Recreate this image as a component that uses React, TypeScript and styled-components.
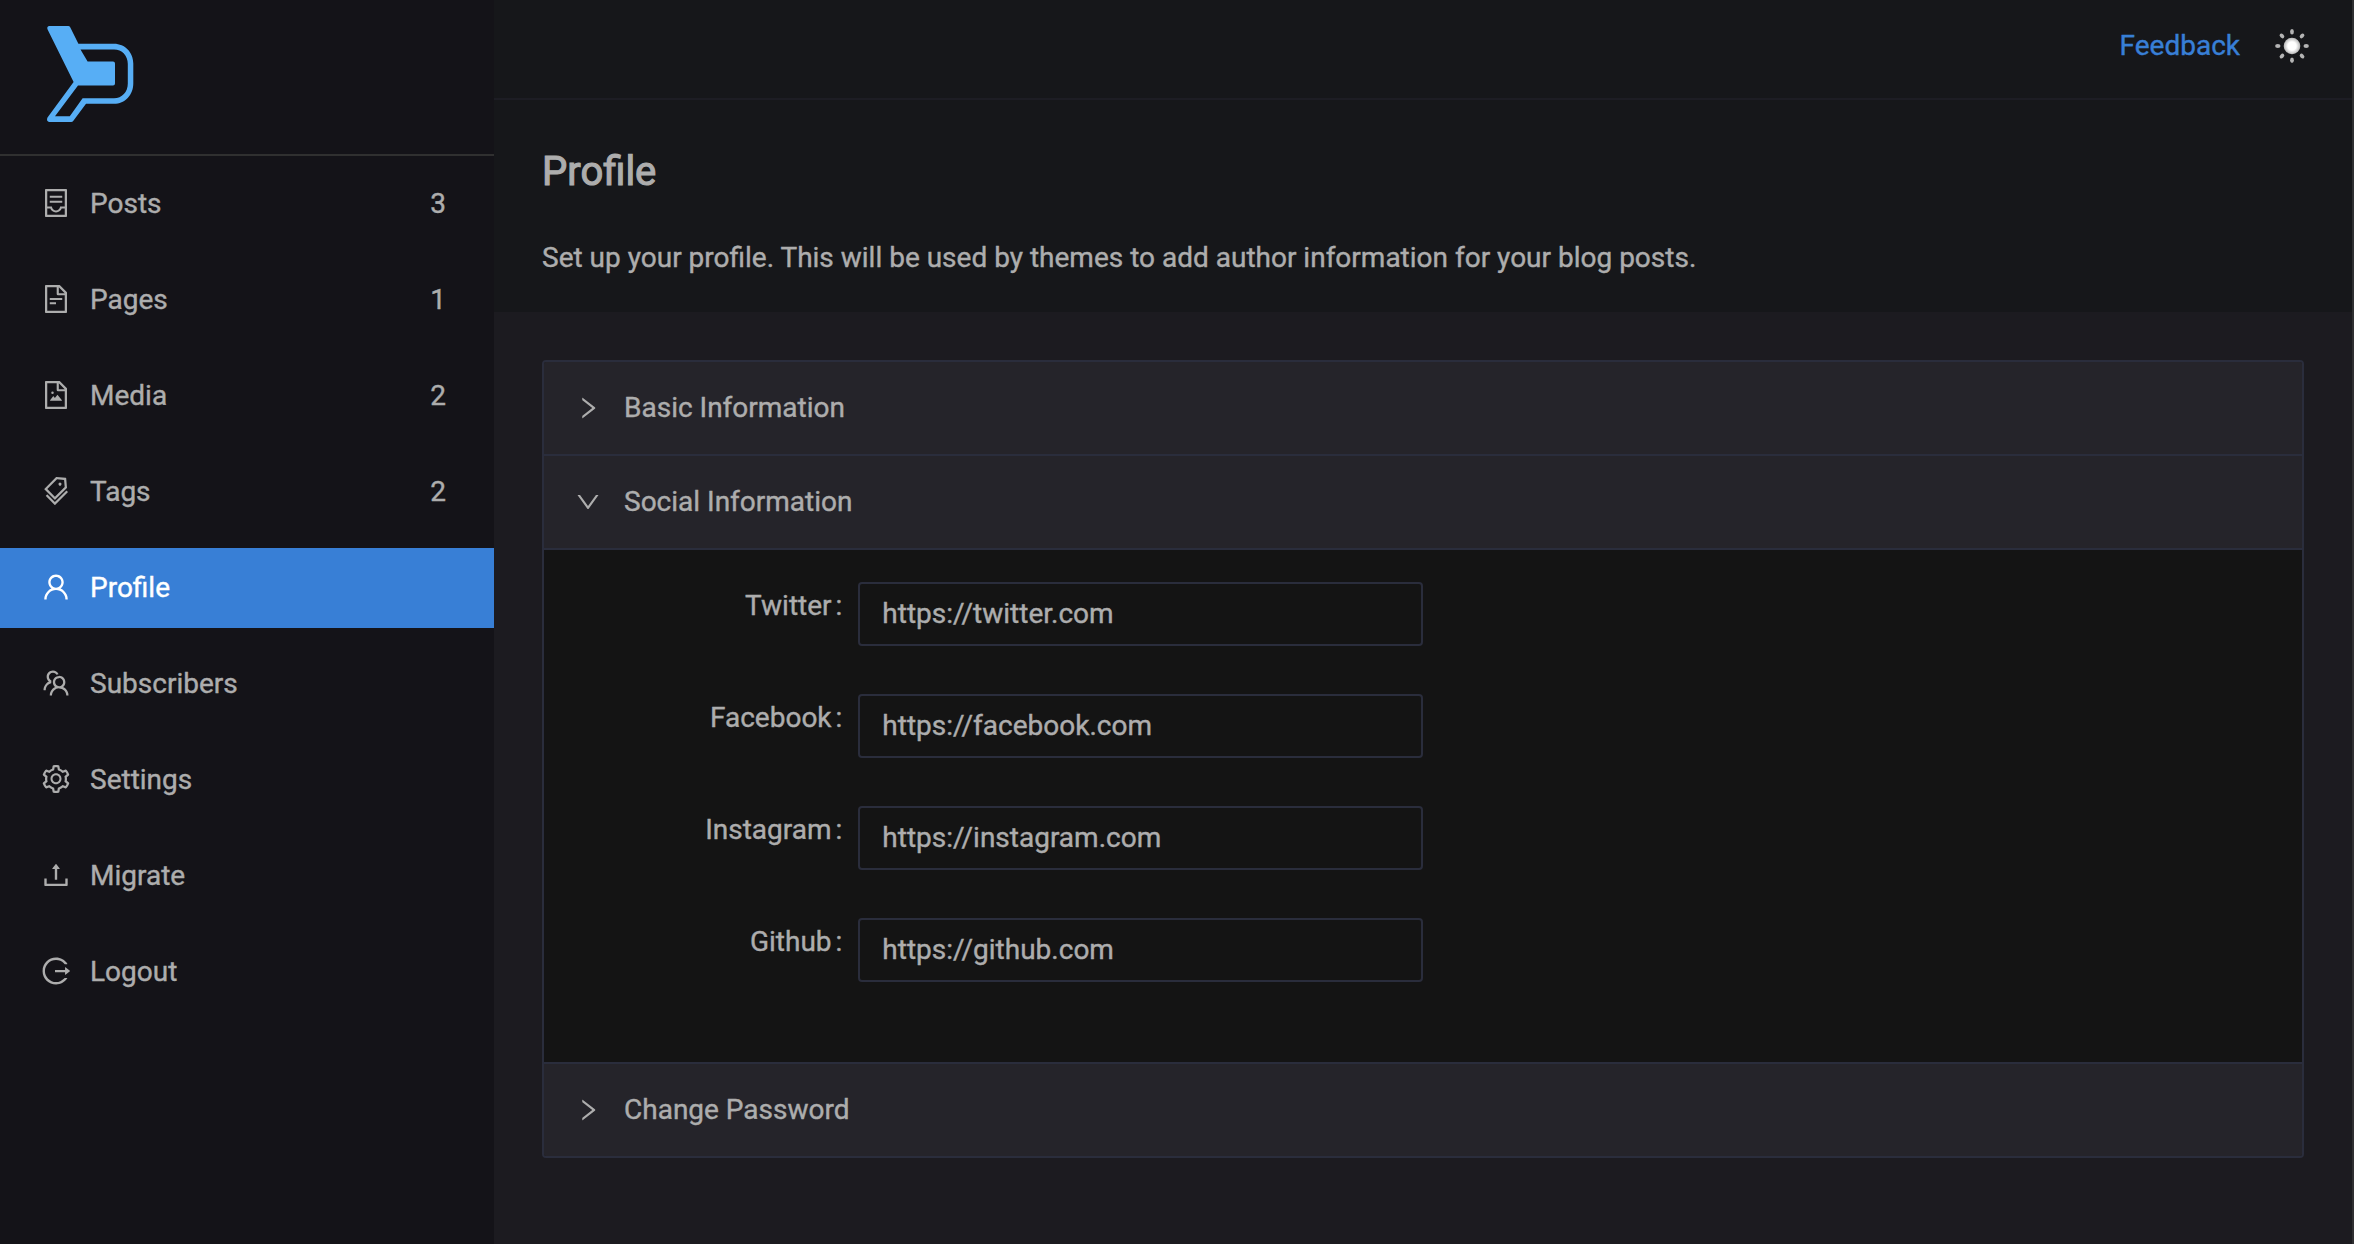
import React from "react";
import styled, { createGlobalStyle } from "styled-components";
import {
  AiOutlineContainer,
  AiOutlineFileText,
  AiOutlineFileImage,
  AiOutlineTags,
  AiOutlineUser,
  AiOutlineTeam,
  AiOutlineSetting,
  AiOutlineUpload,
  AiOutlineLogout,
  AiOutlineRight,
  AiOutlineDown,
} from "react-icons/ai";
import type { IconType } from "react-icons";

const color = {
  sidebar: "#141318",
  header: "#16171a",
  body: "#1c1b20",
  panelHead: "#25242a",
  panelBody: "#141414",
  border: "#2a2d3c",
  line: "#303030",
  text: "#adadad",
  accent: "#387fd6",
};

const GlobalStyle = createGlobalStyle`
  *, *::before, *::after { box-sizing: border-box; }
  body {
    margin: 0;
    background: ${color.body};
    color: ${color.text};
    font-family: Roboto, "Liberation Sans", sans-serif;
    font-size: 28px;
    line-height: 44px;
    -webkit-text-stroke: 0.4px currentColor;
    overflow: hidden;
  }
`;

const Layout = styled.div`
  display: flex;
  height: 1244px;
`;

const Sidebar = styled.aside`
  flex: none;
  width: 494px;
  background: ${color.sidebar};
`;

const Brand = styled.div`
  height: 156px;
  padding: 26px 0 0 46px;
  border-bottom: 2px solid ${color.line};
  svg { display: block; }
`;

const Menu = styled.nav`
  display: flex;
  flex-direction: column;
  gap: 16px;
  padding-top: 8px;
`;

const MenuItem = styled.a<{ $active?: boolean }>`
  display: flex;
  align-items: center;
  height: 80px;
  padding: 0 48px 0 40px;
  color: ${(p) => (p.$active ? "#fff" : color.text)};
  background: ${(p) => (p.$active ? color.accent : "transparent")};
  svg { flex: none; width: 32px; height: 32px; margin-bottom: 2px; }
`;

const MenuLabel = styled.span`
  flex: 1;
  margin-left: 18px;
`;

const Main = styled.main`
  flex: 1;
  display: flex;
  flex-direction: column;
  background: ${color.body};
  border-right: 2px solid #2f2f31;
`;

const TopBar = styled.header`
  display: flex;
  align-items: center;
  justify-content: flex-end;
  gap: 34px;
  height: 100px;
  padding: 0 42px 6px 0;
  background: ${color.header};
  border-bottom: 2px solid #1d1d24;
  svg { display: block; }
`;

const FeedbackLink = styled.a`
  color: ${color.accent};
`;

const PageHeader = styled.section`
  height: 212px;
  padding: 40px 48px 0;
  background: ${color.header};
`;

const Title = styled.h1`
  margin: 0;
  font-size: 40px;
  line-height: 64px;
  font-weight: 400;
  -webkit-text-stroke: 1.1px currentColor;
`;

const Description = styled.p`
  margin: 32px 0 0;
`;

const Accordion = styled.section`
  margin: 48px 48px 0;
  border: 2px solid ${color.border};
  border-radius: 4px;
  overflow: hidden;
`;

const PanelHeader = styled.div<{ $divided?: boolean }>`
  display: flex;
  align-items: center;
  gap: 22px;
  height: ${(p) => (p.$divided ? 94 : 92)}px;
  padding: 0 32px 0 30px;
  background: ${color.panelHead};
  border-bottom: ${(p) => (p.$divided ? `2px solid ${color.border}` : "none")};
  svg { flex: none; width: 28px; height: 28px; }
`;

const PanelBody = styled.form`
  padding: 32px;
  background: ${color.panelBody};
  border-bottom: 2px solid ${color.border};
`;

const Field = styled.div`
  display: grid;
  grid-template-columns: 4fr 8fr 12fr;
  height: 64px;
  margin-bottom: 48px;
`;

const FieldLabel = styled.label`
  padding-right: 16px;
  text-align: right;
  line-height: 48px;
  &::after { content: ":"; margin-left: 4px; }
`;

const Input = styled.input`
  width: 100%;
  height: 64px;
  padding: 0 22px 2px;
  color: inherit;
  font: inherit;
  background: transparent;
  border: 2px solid ${color.border};
  border-radius: 4px;
  outline: none;
`;

const Logo = () => (
  <svg width="88" height="97" viewBox="46 26 88 97" fill="#57aef5">
    <path
      fillRule="evenodd"
      d="M49 26H68.200Q69.600 26 70.200 27.200L78.400 43.800H114C125 43.800 133.300 52.500 133.300 63.500V83.500C133.300 95 125 103.800 114 103.800H86L73.200 121Q72.500 122 71.200 122H49Q46 121 47.500 117.500L73.600 82L47.600 29.500Q46.500 26.500 49 26ZM80.500 49.500L87.600 61.600H113Q115 61.600 115 63.600V83.600Q115 85.600 113 85.600H78L55 116.200H69.800L82.600 98.300H114C122 98.300 127.800 92 127.800 83.500V64C127.800 55.500 122 49.500 114 49.500Z"
    />
  </svg>
);

const Sun = () => (
  <svg width="36" height="36" viewBox="-18 -18 36 36">
    <defs>
      <radialGradient id="sun">
        <stop offset="0.5" stopColor="#fff" />
        <stop offset="1" stopColor="#b4b4b4" />
      </radialGradient>
    </defs>
    <circle r="8.300" fill="url(#sun)" />
    {[0, 45, 90, 135, 180, 225, 270, 315].map((a) => (
      <ellipse key={a} cy="-14.200" rx="1.900" ry="2.700" fill="#b4b4b4" transform={`rotate(${a})`} />
    ))}
  </svg>
);

const menu: { label: string; icon: IconType; count?: number; active?: boolean }[] = [
  { label: "Posts", icon: AiOutlineContainer, count: 3 },
  { label: "Pages", icon: AiOutlineFileText, count: 1 },
  { label: "Media", icon: AiOutlineFileImage, count: 2 },
  { label: "Tags", icon: AiOutlineTags, count: 2 },
  { label: "Profile", icon: AiOutlineUser, active: true },
  { label: "Subscribers", icon: AiOutlineTeam },
  { label: "Settings", icon: AiOutlineSetting },
  { label: "Migrate", icon: AiOutlineUpload },
  { label: "Logout", icon: AiOutlineLogout },
];

const socials = [
  ["Twitter", "https://twitter.com"],
  ["Facebook", "https://facebook.com"],
  ["Instagram", "https://instagram.com"],
  ["Github", "https://github.com"],
];

export default function App() {
  return (
    <>
      <GlobalStyle />
      <Layout>
        <Sidebar>
          <Brand>
            <Logo />
          </Brand>
          <Menu>
            {menu.map(({ label, icon: Icon, count, active }) => (
              <MenuItem key={label} $active={active}>
                <Icon />
                <MenuLabel>{label}</MenuLabel>
                {count !== undefined && <span>{count}</span>}
              </MenuItem>
            ))}
          </Menu>
        </Sidebar>
        <Main>
          <TopBar>
            <FeedbackLink>Feedback</FeedbackLink>
            <Sun />
          </TopBar>
          <PageHeader>
            <Title>Profile</Title>
            <Description>
              Set up your profile. This will be used by themes to add author information for your blog posts.
            </Description>
          </PageHeader>
          <Accordion>
            <PanelHeader $divided>
              <AiOutlineRight />
              Basic Information
            </PanelHeader>
            <PanelHeader $divided>
              <AiOutlineDown />
              Social Information
            </PanelHeader>
            <PanelBody>
              {socials.map(([name, url]) => (
                <Field key={name}>
                  <FieldLabel htmlFor={name}>{name}</FieldLabel>
                  <Input id={name} defaultValue={url} />
                </Field>
              ))}
            </PanelBody>
            <PanelHeader>
              <AiOutlineRight />
              Change Password
            </PanelHeader>
          </Accordion>
        </Main>
      </Layout>
    </>
  );
}
